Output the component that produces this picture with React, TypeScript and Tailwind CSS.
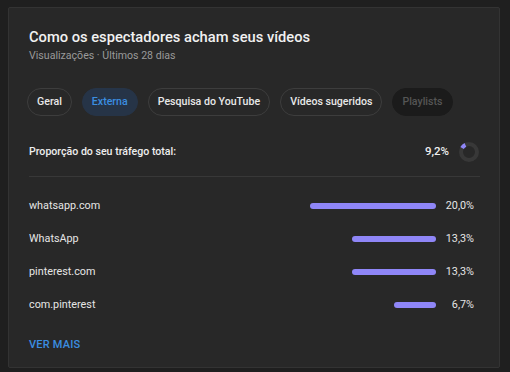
import React from "react";

type Source = {
  name: string;
  value: number;
  label: string;
};

const sources: Source[] = [
  { name: "whatsapp.com", value: 20.0, label: "20,0%" },
  { name: "WhatsApp", value: 13.3, label: "13,3%" },
  { name: "pinterest.com", value: 13.3, label: "13,3%" },
  { name: "com.pinterest", value: 6.7, label: "6,7%" },
];

const tabs = ["Geral", "Externa", "Pesquisa do YouTube", "Vídeos sugeridos", "Playlists"];

function Donut({ percent }: { percent: number }) {
  const r = 8;
  const c = 2 * Math.PI * r;
  return (
    <svg width="22" height="22" viewBox="0 0 22 22">
      <circle cx="11" cy="11" r={r} fill="none" stroke="#383838" strokeWidth="4" />
      <circle
        cx="11"
        cy="11"
        r={r}
        fill="none"
        stroke="#8f86f7"
        strokeWidth="4"
        strokeDasharray={`${(c * percent) / 100} ${c}`}
        transform="rotate(-150 11 11)"
      />
    </svg>
  );
}

export default function App() {
  const max = 20;
  return (
    <div className="w-[510px] h-[372px] bg-[#1f1f1f] pt-[7px] pl-[8px] font-['Roboto',sans-serif]">
      <div className="w-[492px] h-[361px] bg-[#282828] border border-[#333333] rounded-[2px] pl-[20px] pr-[19px] pt-[19px]">
        {/* header */}
        <h1 className="text-[14.7px] leading-[20px] font-medium text-[#f1f1f1]">
          Como os espectadores acham seus vídeos
        </h1>
        <p className="text-[10.6px] leading-[14px] text-[#9a9a9a] mt-[2px]">
          Visualizações · Últimos 28 dias
        </p>

        {/* tabs */}
        <div className="flex gap-[10px] mt-[25px] -ml-[2px]">
          {tabs.map((tab) => (
            <div
              key={tab}
              className={`h-[28px] px-[9px] rounded-full flex items-center whitespace-nowrap text-[10.6px] font-medium border ${
                tab === "Externa"
                  ? "bg-[#263447] border-[#263447] text-[#3b8ee0]"
                  : tab === "Playlists"
                  ? "bg-[#1b1b1b] border-[#1b1b1b] text-[#555555]"
                  : "border-[#3d3d3d] text-[#e8e8e8]"
              }`}
            >
              {tab}
            </div>
          ))}
        </div>

        {/* total share */}
        <div className="flex items-center justify-between mt-[24px] h-[24px]">
          <span className="text-[10.6px] font-medium text-[#eeeeee]">Proporção do seu tráfego total:</span>
          <div className="flex items-center gap-[9px]">
            <span className="text-[11.5px] font-medium text-[#eeeeee]">9,2%</span>
            <Donut percent={9.2} />
          </div>
        </div>
        <div className="border-t border-[#383838] mt-[12px]" />

        {/* source rows */}
        <div className="flex flex-col gap-[17px] mt-[21px]">
          {sources.map((s) => (
            <div key={s.name} className="flex items-center h-[16px]">
              <span className="flex-1 text-[10.8px] text-[#e6e6e6]">{s.name}</span>
              <div className="w-[126px] flex justify-end">
                <div
                  className="h-[6px] rounded-full bg-[#8f86f7]"
                  style={{ width: `${(s.value / max) * 126}px` }}
                />
              </div>
              <span className="w-[38px] text-right text-[10.8px] text-[#e6e6e6] mr-[6px]">{s.label}</span>
            </div>
          ))}
        </div>

        <button className="mt-[24px] text-[11px] font-medium text-[#3b8ee0] tracking-[0.2px]">VER MAIS</button>
      </div>
    </div>
  );
}
